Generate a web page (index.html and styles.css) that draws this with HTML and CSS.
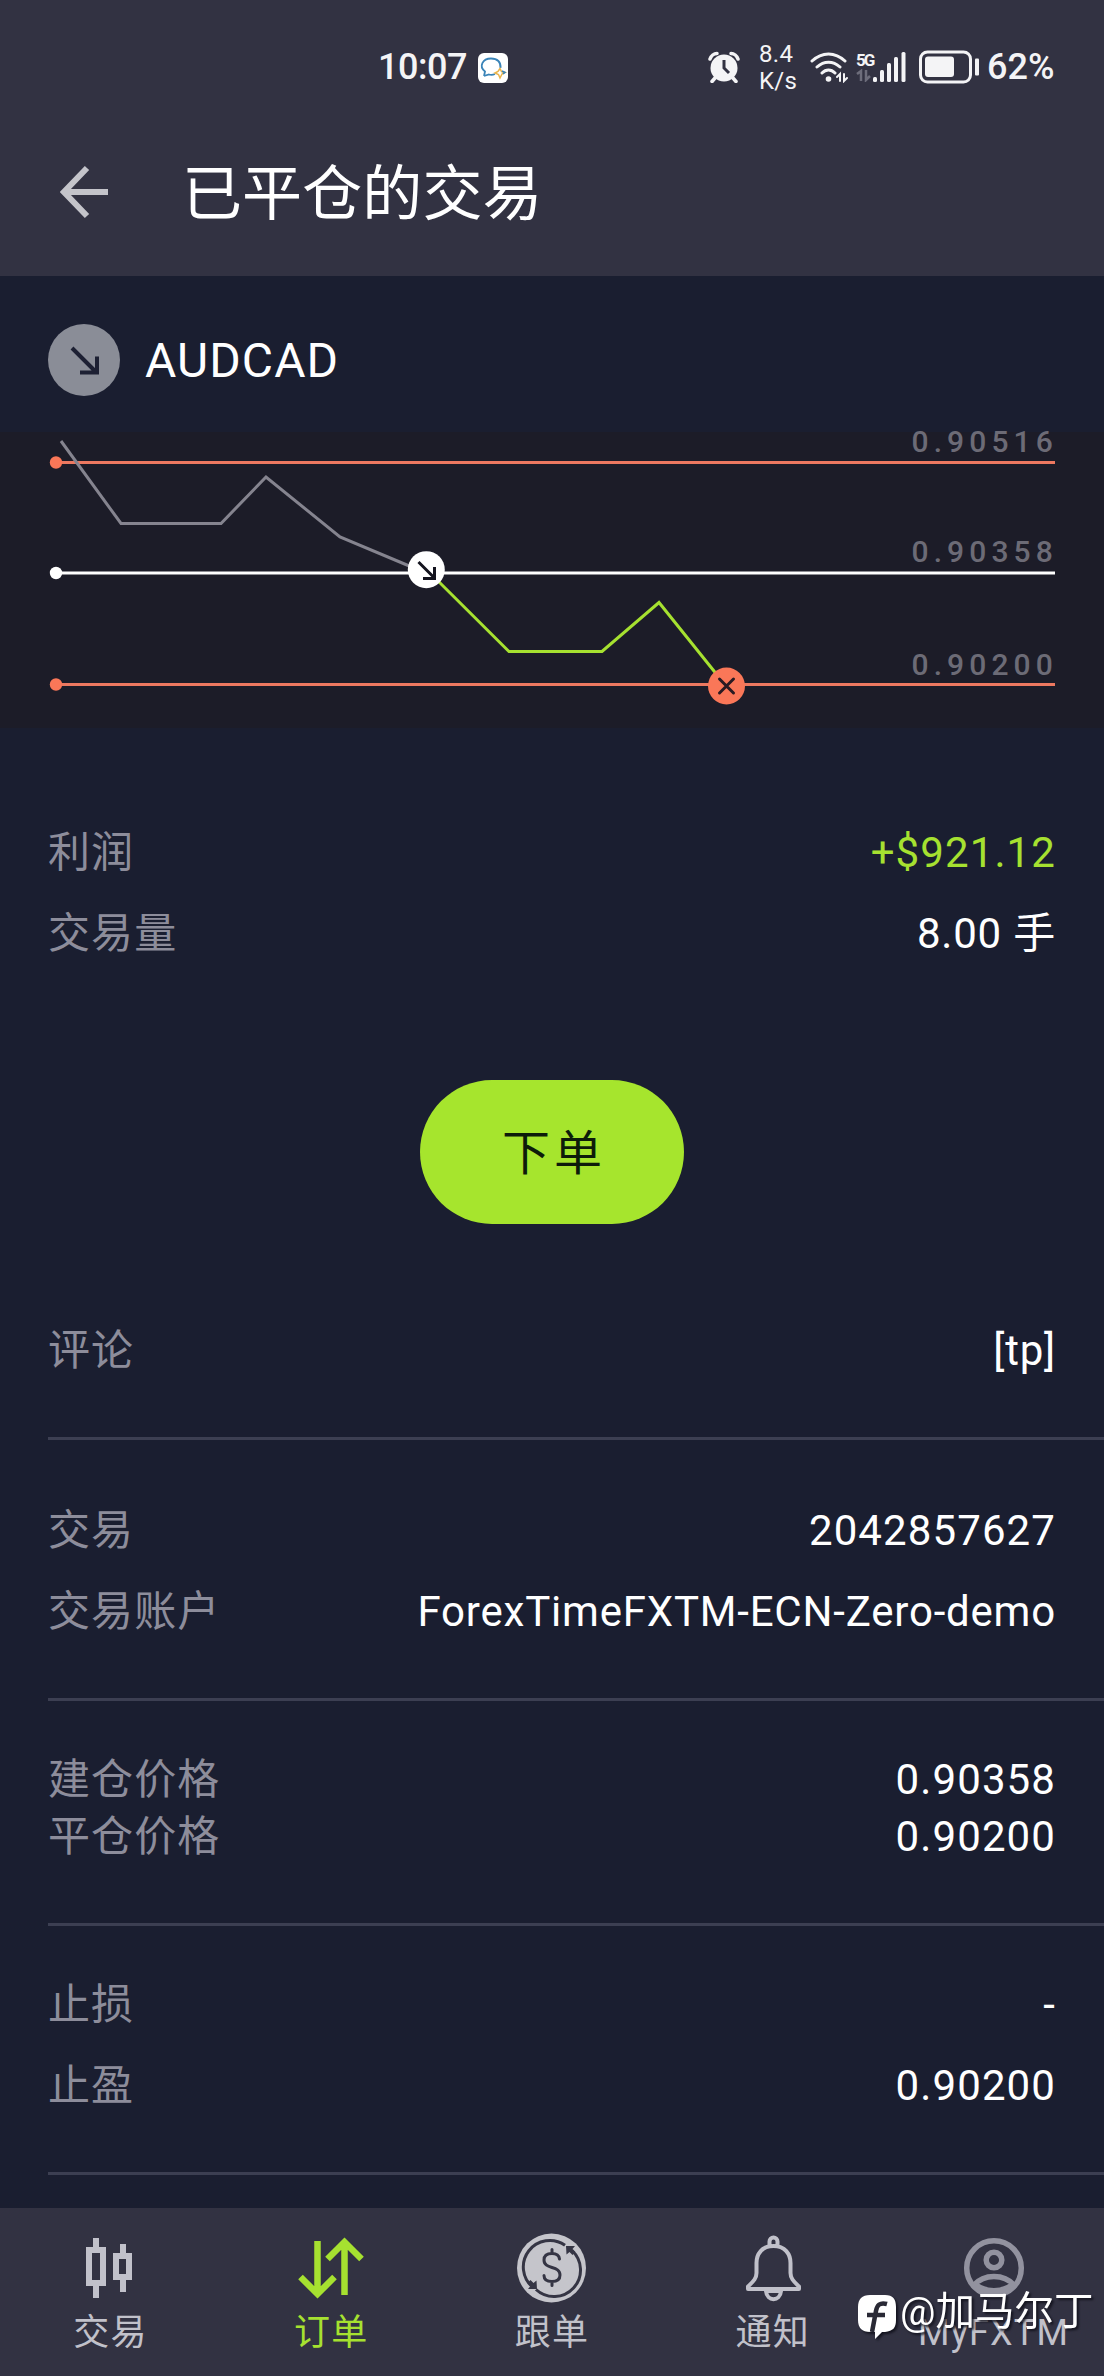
FILE: index.html
```
<!DOCTYPE html>
<html lang="zh-CN">
<head>
  <meta charset="UTF-8">
  <meta name="viewport" content="width=device-width, initial-scale=1.0">
  <title>已平仓的交易</title>
  <link rel="stylesheet" href="styles.css">
</head>
<body>
  <header>
    <div class="status">
      <span class="time">10:07</span>
      <svg class="app" width="30" height="30" viewBox="0 0 30 30" fill="none">
        <rect width="30" height="30" rx="6" fill="#fff"/>
        <path d="M6 23l1-4.500C.5 13.500 4.500 5.500 13 5.500c6.500 0 10 3.500 9.500 9.500M6 23l5-1.500c2 .5 4 .4 6-.5" stroke="#3a84b8" stroke-width="1.800"/>
        <path d="M22 15.500l1.500 3 3.500 1-3 1.500-2 4-1.500-3.500-3.500-1.500 3-1.500z" stroke="#e9b44c" stroke-width="1.500"/>
        <path d="M24 18l3 1.500-2 1.500" stroke="#3a84b8" stroke-width="1.500"/>
      </svg>
      <svg class="alarm" width="32" height="32" viewBox="0 0 32 32" fill="none">
        <circle cx="16" cy="17" r="13.500" fill="#f4f4f6"/>
        <path d="M2 8c1-3 4-5.500 7-5.500M30 8c-1-3-4-5.500-7-5.500M7 27l-3 3.500M25 27l3 3.500" stroke="#f4f4f6" stroke-width="3.500" stroke-linecap="round"/>
        <path d="M16 9v8l5 5" stroke="#323242" stroke-width="3"/>
      </svg>
      <span class="speed">8.4<br>K/s</span>
      <svg class="wifi" width="38" height="32" viewBox="0 0 38 32" fill="none" stroke="#f4f4f6" stroke-linecap="round">
        <path d="M2 10c10-9.500 23-9.500 33 0M7 16c7-6.500 16-6.500 23 0M12 22c4-4 9-4 13 0" stroke-width="3"/>
        <circle cx="18.500" cy="28" r="2.800" fill="#f4f4f6" stroke="none"/>
        <path d="M27 26l3-3v7M34 23v7l3-3" stroke-width="2"/>
      </svg>
      <div class="net">
        <span>5G</span>
        <svg width="16" height="13" viewBox="0 0 16 13" fill="none" stroke="#6d6d7b" stroke-width="2.500"><path d="M1 5l4-3v10M10 1v10l4-4"/></svg>
      </div>
      <svg class="bars" width="34" height="32" viewBox="0 0 34 32" fill="#f4f4f6">
        <rect x="0" y="26" width="4" height="5" rx="1.500"/>
        <rect x="7" y="19" width="4" height="12" rx="1.500"/>
        <rect x="14" y="12" width="4" height="19" rx="1.500"/>
        <rect x="21" y="6" width="4" height="25" rx="1.500"/>
        <rect x="28.500" y="1" width="4" height="30" rx="1.500"/>
      </svg>
      <svg class="battery" width="62" height="34" viewBox="0 0 62 34">
        <rect x="1.500" y="2" width="50" height="30" rx="7" fill="none" stroke="#f4f4f6" stroke-width="3"/>
        <rect x="6" y="6.500" width="29" height="20.500" rx="3" fill="#f4f4f6"/>
        <rect x="56" y="8.500" width="4" height="17" rx="1" fill="#f4f4f6"/>
      </svg>
      <span class="percent">62%</span>
    </div>
    <div class="title">
      <svg width="49" height="54" viewBox="0 0 49 54" fill="none" stroke="#c4c4ca" stroke-width="6">
        <path d="M48 27H4M27 3L4 27l23 24"/>
      </svg>
      <h1>已平仓的交易</h1>
    </div>
  </header>

  <main>
    <div class="symbol">
      <svg width="72" height="72" viewBox="0 0 72 72" fill="none">
        <circle cx="36" cy="36" r="36" fill="#8a8d97"/>
        <path d="M24 24l24 24M49 32.500V48.500H32" stroke="#1d2033" stroke-width="4"/>
      </svg>
      <span>AUDCAD</span>
    </div>

    <svg class="chart" width="1104" height="296" viewBox="0 0 1104 296" fill="none">
      <g stroke-width="3">
        <path d="M56 30.500H1055M56 252.500H1055" stroke="#ec7860"/>
        <path d="M56 141H1055" stroke="#fff"/>
        <path d="M61 9L121 91.500H221L266 45 340 105 426 141" stroke="#85848f"/>
        <path d="M426 137L509 219.500H602L659 170.500 726 254" stroke="#a6e130"/>
      </g>
      <circle cx="56" cy="30.500" r="6.200" fill="#fa7758"/>
      <circle cx="56" cy="141" r="6.200" fill="#fff"/>
      <circle cx="56" cy="252.500" r="6.200" fill="#fa7758"/>
      <!-- open -->
      <circle cx="426.300" cy="137.700" r="18.500" fill="#fff"/>
      <path d="M418.500 130l15.500 15.500M434.500 135v11.500H423" stroke="#14141f" stroke-width="3"/>
      <!-- close -->
      <circle cx="726.500" cy="254" r="18.500" fill="#fa7758"/>
      <path d="M719.500 247l14 14M733.500 247l-14 14" stroke="#2a1a22" stroke-width="3" stroke-linecap="round"/>
      <g class="prices">
        <text x="911.500" y="19.500">0.90516</text>
        <text x="911.500" y="129.500">0.90358</text>
        <text x="911.500" y="242.500">0.90200</text>
      </g>
    </svg>

    <section class="summary">
      <div class="row"><span>利润</span><b class="profit">+$921.12</b></div>
      <div class="row"><span>交易量</span><b class="tight">8.00 手</b></div>
    </section>

    <button>下单</button>

    <section class="comment">
      <div class="row"><span>评论</span><b class="tight">[tp]</b></div>
    </section>
    <section class="deal">
      <div class="row"><span>交易</span><b>2042857627</b></div>
      <div class="row"><span>交易账户</span><b class="tight">ForexTimeFXTM-ECN-Zero-demo</b></div>
    </section>
    <section class="price">
      <div class="row"><span>建仓价格</span><b>0.90358</b></div>
      <div class="row"><span>平仓价格</span><b>0.90200</b></div>
    </section>
    <section>
      <div class="row"><span>止损</span><b>-</b></div>
      <div class="row"><span>止盈</span><b>0.90200</b></div>
    </section>
  </main>

  <nav>
    <a>
      <svg width="72" height="72" viewBox="0 0 72 72" fill="none" stroke="#c1c1ca" stroke-width="6">
        <path d="M22 6v9M22 53v13M15 18h14v33H15zM49 12v9M49 47v13M42 24h13v21H42z"/>
      </svg>
      <span>交易</span>
    </a>
    <a class="active">
      <svg width="72" height="72" viewBox="0 0 72 72" fill="none" stroke="#a6e130" stroke-width="6.500">
        <path d="M22.500 9v52M5.500 45l17 17 17-17M49.500 63V11M32.500 27l17-17 17 17"/>
      </svg>
      <span>订单</span>
    </a>
    <a>
      <svg width="72" height="72" viewBox="0 0 72 72" fill="none">
        <circle cx="35.500" cy="36" r="34.500" fill="#c5c5cb"/>
        <g stroke="#353544" stroke-width="3">
          <path d="M17 55.500A26.500 26.500 0 0 1 49 13.300M20 57.500A26.500 26.500 0 0 0 56 18.500"/>
          <path d="M43.500 27c-.5-4-3-5.500-7.500-5.500-5 0-8 2-8 6.500 0 10 16 5 16 15 0 4.500-3.500 6.500-8 6.500-5 0-8-2-8-6M36 17.500v4M36 49.500v4" stroke-linecap="round"/>
        </g>
        <path d="M50 14h9l-2.500 3 3 3-3 3-3-3-3 2.500zM21 57h-9l2.500-3-3-3 3-3 3 3 3-2.500z" fill="#353544"/>
      </svg>
      <span>跟单</span>
    </a>
    <a>
      <svg width="72" height="72" viewBox="0 0 72 72" fill="none" stroke="#c1c1ca" stroke-width="4" stroke-linejoin="round">
        <path d="M32.500 15V9.500a4 4 0 0 1 8 0V15M36.500 14C25 14 19.500 22 19.500 31v10c0 6-4 9-8.500 13.500v2.500h51v-2.500C57.500 50 53.500 47 53.500 41V31C53.500 22 48 14 36.500 14zM29 59c1 11 14 11 15 0z"/>
      </svg>
      <span>通知</span>
    </a>
    <a>
      <svg width="72" height="72" viewBox="0 0 72 72" fill="none" stroke="#92929f" stroke-width="5.500">
        <circle cx="36" cy="36" r="27.300"/>
        <circle cx="36" cy="28" r="7.800"/>
        <path d="M16 53c10-11.500 30-11.500 40 0M18 53c10 7.500 26 7.500 36 0"/>
      </svg>
      <span>MyFXTM</span>
    </a>
  </nav>

  <div class="watermark">
    <svg width="39" height="44" viewBox="0 0 39 44">
      <path d="M12 0h15c8 0 11 4 11 12v13c0 8-3 11-11 12h-3l-7 7v-7h-5C4 37 0 33 0 25V12C0 4 4 0 12 0z" fill="#fff"/>
      <path d="M29 9c-7-2-10 1-11 7l-4 21M9 20h18" fill="none" stroke="#292935" stroke-width="4.500"/>
    </svg>
    <span>@加马尔丁</span>
  </div>
</body>
</html>
```

FILE: styles.css
```
* {
  box-sizing: border-box;
}
body {
  margin: 0;
  height: 2376px;
  display: flex;
  flex-direction: column;
  position: relative;
  overflow: hidden;
  background-color: #1a1e30;
  color: #fff;
  font-family: Roboto, "Noto Sans CJK SC", sans-serif;
}
svg {
  display: block;
  flex: none;
}
header {
  height: 276px;
  background-color: #323242;
}
.status {
  display: flex;
  align-items: center;
  height: 133px;
  padding-left: 378px;
  color: #f4f4f6;
  font-weight: 500;
}
.time {
  width: 100px;
  font-size: 36px;
  letter-spacing: -0.5px;
}
.app {
  margin-top: 2px;
}
.alarm {
  margin-left: 200px;
}
.speed {
  width: 52px;
  margin: 3px 0 0 19px;
  font-size: 24px;
  font-weight: 400;
  line-height: 27px;
  letter-spacing: 0.3px;
}
.wifi {
  margin-left: -1px;
}
.net {
  width: 17px;
  margin-left: 8px;
}
.net span {
  display: block;
  font-size: 17px;
  font-weight: 700;
  line-height: 18px;
  letter-spacing: -2px;
}
.bars {
  margin-left: 0;
}
.battery {
  margin-left: 12px;
}
.percent {
  margin-left: 6px;
  font-size: 36px;
}
.title {
  display: flex;
  align-items: center;
  height: 118px;
  padding-left: 60px;
}
h1 {
  margin: 5px 0 0 73px;
  font-size: 60px;
  font-weight: 400;
  line-height: 80px;
  letter-spacing: 0.1px;
}
main {
  flex: 1;
}
.symbol {
  display: flex;
  align-items: center;
  height: 156px;
  padding: 12px 48px 0;
  gap: 25px;
  font-size: 48px;
  letter-spacing: 1.1px;
}
.symbol span {
  margin-top: 1px;
}
.chart {
  overflow: visible;
  background-color: #1c1c28;
}
.prices {
  fill: #6c6b76;
  font-size: 30px;
  font-weight: 500;
  letter-spacing: 5.1px;
}
section {
  margin-left: 48px;
  padding: 50px 48px 58px 0;
  border-bottom: 3px solid #3c3f52;
}
.row {
  display: flex;
  justify-content: space-between;
  font-size: 42px;
  line-height: 57px;
  letter-spacing: 1.1px;
}
.row + .row {
  margin-top: 24px;
}
.row span {
  color: #8d8d9b;
}
.row b {
  font-weight: 400;
}
.row .tight {
  letter-spacing: 0.8px;
}
.row .profit {
  color: #a6e130;
}
.summary {
  padding: 96px 48px 118px 0;
  border: 0;
}
button {
  display: block;
  width: 264px;
  height: 144px;
  margin: 0 auto;
  padding: 0 0 6px 4px;
  border: 0;
  border-radius: 72px;
  background-color: #a6e52d;
  color: #0d1c0a;
  font: inherit;
  font-size: 48px;
  letter-spacing: 4px;
}
.comment {
  padding-top: 98px;
}
.deal {
  padding-top: 62px;
}
.price .row {
  margin-top: 0;
}
nav {
  display: flex;
  height: 168px;
  background-color: #323242;
}
nav a {
  flex: 1;
  display: flex;
  flex-direction: column;
  align-items: center;
  padding-top: 24px;
  color: #c1c1ca;
  font-size: 36px;
  line-height: 48px;
  letter-spacing: 1.2px;
}
nav span {
  margin-top: 5px;
}
nav .active {
  color: #a6e130;
}
.watermark {
  position: absolute;
  left: 858px;
  top: 2288px;
  display: flex;
  font-size: 39.5px;
  line-height: 48px;
  filter: drop-shadow(2px 2px 1px #14141f);
}
.watermark svg {
  margin: 7px 3px 0 0;
}
```
